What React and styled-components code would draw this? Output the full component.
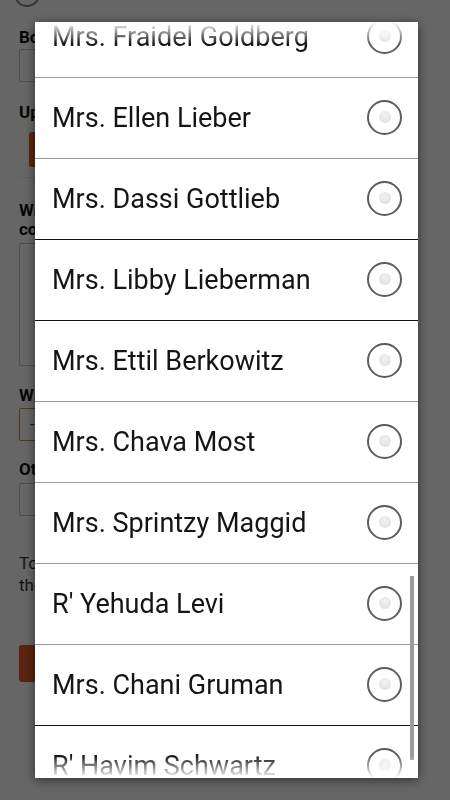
import React from 'react';
import styled, { createGlobalStyle } from 'styled-components';

const names = [
  'Mrs. Fraidel Goldberg',
  'Mrs. Ellen Lieber',
  'Mrs. Dassi Gottlieb',
  'Mrs. Libby Lieberman',
  'Mrs. Ettil Berkowitz',
  'Mrs. Chava Most',
  'Mrs. Sprintzy Maggid',
  "R' Yehuda Levi",
  'Mrs. Chani Gruman',
  "R' Havim Schwartz",
];

// divider shade under each row (some render darker on the device)
const darkDividers = [2, 3, 8];

const GlobalStyle = createGlobalStyle`
  html, body {
    margin: 0;
    padding: 0;
    background: #fff;
    font-family: Roboto, "Liberation Sans", sans-serif;
  }
  #root {
    width: 450px;
    height: 800px;
    overflow: hidden;
  }
`;

const Page = styled.div`
  width: 360px;
  padding: 0 19px;
  display: flex;
  flex-direction: column;
`;

const TopRadio = styled.div`
  width: 22px;
  height: 22px;
  margin: -19px 0 0 -5px;
  border: 2px solid #888;
  border-radius: 50%;
`;

const Label = styled.div`
  font-weight: bold;
  font-size: 17px;
  line-height: 19px;
  color: #111;
  margin-top: ${p => p.$top || 0}px;
`;

const Field = styled.div`
  height: ${p => p.$h || 31}px;
  margin-top: ${p => p.$top ?? 4}px;
  border: 1px solid ${p => (p.$accent ? '#c9882f' : '#c4c4c4')};
  border-radius: 2px;
  display: flex;
  align-items: center;
  padding-left: 10px;
  font-size: 16px;
  color: #444;
`;

const UploadBox = styled.div`
  padding: 10px 10px;
  border-bottom: 1px solid #eee;
`;

const Button = styled.div`
  width: 130px;
  height: ${p => p.$h || 35}px;
  margin-top: ${p => p.$top || 0}px;
  background: #e05a26;
  border-radius: 3px;
`;

const Note = styled.div`
  margin-top: 36px;
  font-size: 17px;
  line-height: 22px;
  color: #333;
`;

const Overlay = styled.div`
  position: fixed;
  inset: 0;
  background: rgba(0, 0, 0, 0.6);
  display: flex;
  align-items: center;
  justify-content: center;
`;

const Dialog = styled.div`
  position: relative;
  width: 383px;
  height: 756px;
  margin-left: 3px;
  background: #fff;
  overflow: hidden;
  box-shadow: 0 2px 10px rgba(0, 0, 0, 0.55);

  &::before,
  &::after {
    content: '';
    position: absolute;
    left: 0;
    right: 0;
    height: 22px;
    pointer-events: none;
  }
  &::before {
    top: 0;
    background: linear-gradient(to bottom, #fff, rgba(255, 255, 255, 0));
  }
  &::after {
    bottom: 0;
    background: linear-gradient(to top, #fff, rgba(255, 255, 255, 0));
  }
`;

const List = styled.div`
  margin-top: -25px;
`;

const Row = styled.div`
  height: 80px;
  display: flex;
  align-items: center;
  justify-content: space-between;
  padding: 0 16px 0 17px;
  border-bottom: 1px solid ${p => (p.$dark ? '#111' : '#9a9a9a')};
`;

const Name = styled.span`
  font-size: 27px;
  color: #151515;
`;

const Radio = styled.span`
  box-sizing: border-box;
  width: 35px;
  height: 35px;
  margin-top: -2px;
  border: 2px solid #5d5d5d;
  border-radius: 50%;
  display: flex;
  align-items: center;
  justify-content: center;

  &::after {
    content: '';
    width: 12px;
    height: 12px;
    border-radius: 50%;
    background: radial-gradient(circle at 50% 35%, #f2f2f2, #dcdcdc);
  }
`;

const Thumb = styled.div`
  position: absolute;
  left: 375px;
  top: 554px;
  width: 4px;
  height: 184px;
  background: #9c9c9c;
`;

export default function App() {
  return (
    <>
      <GlobalStyle />
      <Page>
        <TopRadio />
        <Label $top={21}>Book Title</Label>
        <Field $top={2} />
        <Label $top={21}>Upload a Picture</Label>
        <UploadBox>
          <Button />
        </UploadBox>
        <Label $top={23}>Write a short note to the</Label>
        <Label>committee</Label>
        <Field $h={121} $top={4} />
        <Label $top={20}>Which teacher?</Label>
        <Field $accent $top={3}>-</Field>
        <Label $top={19}>Other</Label>
        <Field $top={4} />
        <Note>
          To submit, please fill in all fields above
          <br />
          then press the button.
        </Note>
        <Button $top={49} $h={37} />
      </Page>
      <Overlay>
        <Dialog>
          <List>
            {names.map((n, i) => (
              <Row key={n} $dark={darkDividers.includes(i)}>
                <Name>{n}</Name>
                <Radio />
              </Row>
            ))}
          </List>
          <Thumb />
        </Dialog>
      </Overlay>
    </>
  );
}
